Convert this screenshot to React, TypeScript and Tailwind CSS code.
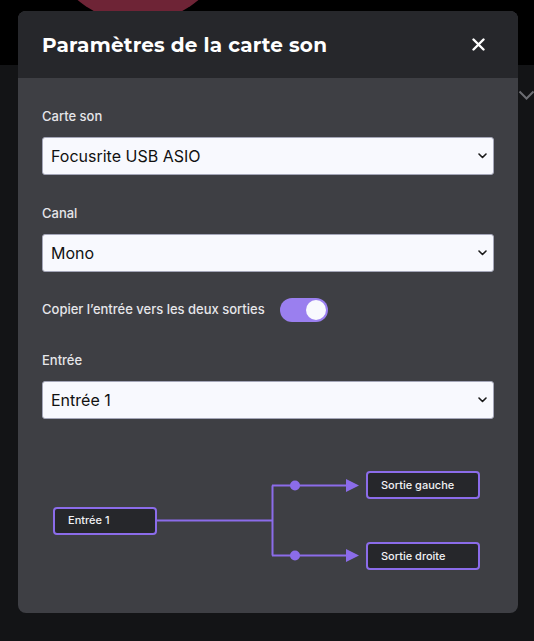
import React from "react";

const PURPLE = "#8b6cea";

function Chevron() {
  return (
    <svg width="9" height="6" viewBox="0 0 9 6" fill="none">
      <path d="M1 1l3.5 3.5L8 1" stroke="#1a1a1a" strokeWidth="1.6" strokeLinecap="round" strokeLinejoin="round" />
    </svg>
  );
}

function Field({ label, value }: { label: string; value: string }) {
  return (
    <div>
      <p className="h-5 text-[13px] font-medium leading-5 text-[#e6e6ea]">{label}</p>
      <div className="mt-[11px] flex h-[38px] items-center justify-between rounded-[3px] border border-[#a4a6b8] bg-[#f8f9fe] pl-2 pr-[6px]">
        <span className="text-[16px] text-[#111]">{value}</span>
        <Chevron />
      </div>
    </div>
  );
}

function Node({ label, className }: { label: string; className: string }) {
  return (
    <div
      className={`flex h-[28px] items-center rounded-[4px] border-2 border-[#8b6cea] bg-[#26272b] pl-[13px] text-[11px] font-medium text-[#f1f1f4] ${className}`}
    >
      {label}
    </div>
  );
}

function Connector() {
  return (
    <svg width="209" height="99" viewBox="0 0 209 99" fill="none">
      <path d="M0 49.5H115.5M115.5 14.5V84.5M115 14.5H190M115 84.5H190" stroke={PURPLE} strokeWidth="2" />
      <circle cx="138" cy="14.5" r="5" fill={PURPLE} />
      <circle cx="138" cy="84.5" r="5" fill={PURPLE} />
      <path d="M189 8L202 14.5L189 21Z" fill={PURPLE} />
      <path d="M189 78L202 84.5L189 91Z" fill={PURPLE} />
    </svg>
  );
}

export default function App() {
  return (
    <div
      className="relative h-[641px] w-[534px] overflow-hidden bg-[#131416]"
      style={{ fontFamily: "Inter, 'Noto Sans', sans-serif" }}
    >
      <div className="relative h-[65px] bg-black">
        <div className="absolute left-[44px] top-[-166px] h-[188px] w-[188px] rounded-full bg-[#6e2436]" />
      </div>
      <svg className="absolute right-0 top-[90px]" width="16" height="11" viewBox="0 0 16 11" fill="none">
        <path d="M1.5 1.5l7 7 7-7" stroke="#6c6d72" strokeWidth="2" />
      </svg>

      <div className="absolute left-[18px] top-[11px] flex h-[602px] w-[500px] flex-col overflow-hidden rounded-[8px] bg-[#3e3f44]">
        <header className="flex h-[67px] shrink-0 items-center justify-between bg-[#26272b] pl-6 pr-[33px]">
          <h1
            className="text-[20px] font-bold tracking-[0.2px] text-white"
            style={{ fontFamily: "Montserrat, 'Open Sans', sans-serif" }}
          >
            Paramètres de la carte son
          </h1>
          <svg width="13" height="13" viewBox="0 0 13 13" fill="none">
            <path d="M1.5 1.5l10 10M11.5 1.5l-10 10" stroke="white" strokeWidth="2.4" strokeLinecap="round" />
          </svg>
        </header>

        <div className="flex flex-col px-6 pt-[28px]">
          <Field label="Carte son" value="Focusrite USB ASIO" />
          <div className="mt-[28px]">
            <Field label="Canal" value="Mono" />
          </div>
          <div className="mt-[26px] flex h-6 items-center gap-[15px]">
            <span className="text-[13px] font-medium text-[#e6e6ea]">Copier l’entrée vers les deux sorties</span>
            <div className="flex h-6 w-12 items-center justify-end rounded-full bg-[#9a7fef] p-[2px]">
              <div className="h-5 w-5 rounded-full bg-[#f8f9fe]" />
            </div>
          </div>
          <div className="mt-[28px]">
            <Field label="Entrée" value="Entrée 1" />
          </div>

          <div className="mt-[52px] flex items-center pl-[11px]">
            <Node label="Entrée 1" className="w-[104px]" />
            <Connector />
            <div className="flex flex-col gap-[43px]">
              <Node label="Sortie gauche" className="w-[114px]" />
              <Node label="Sortie droite" className="w-[114px]" />
            </div>
          </div>
        </div>
      </div>
    </div>
  );
}
